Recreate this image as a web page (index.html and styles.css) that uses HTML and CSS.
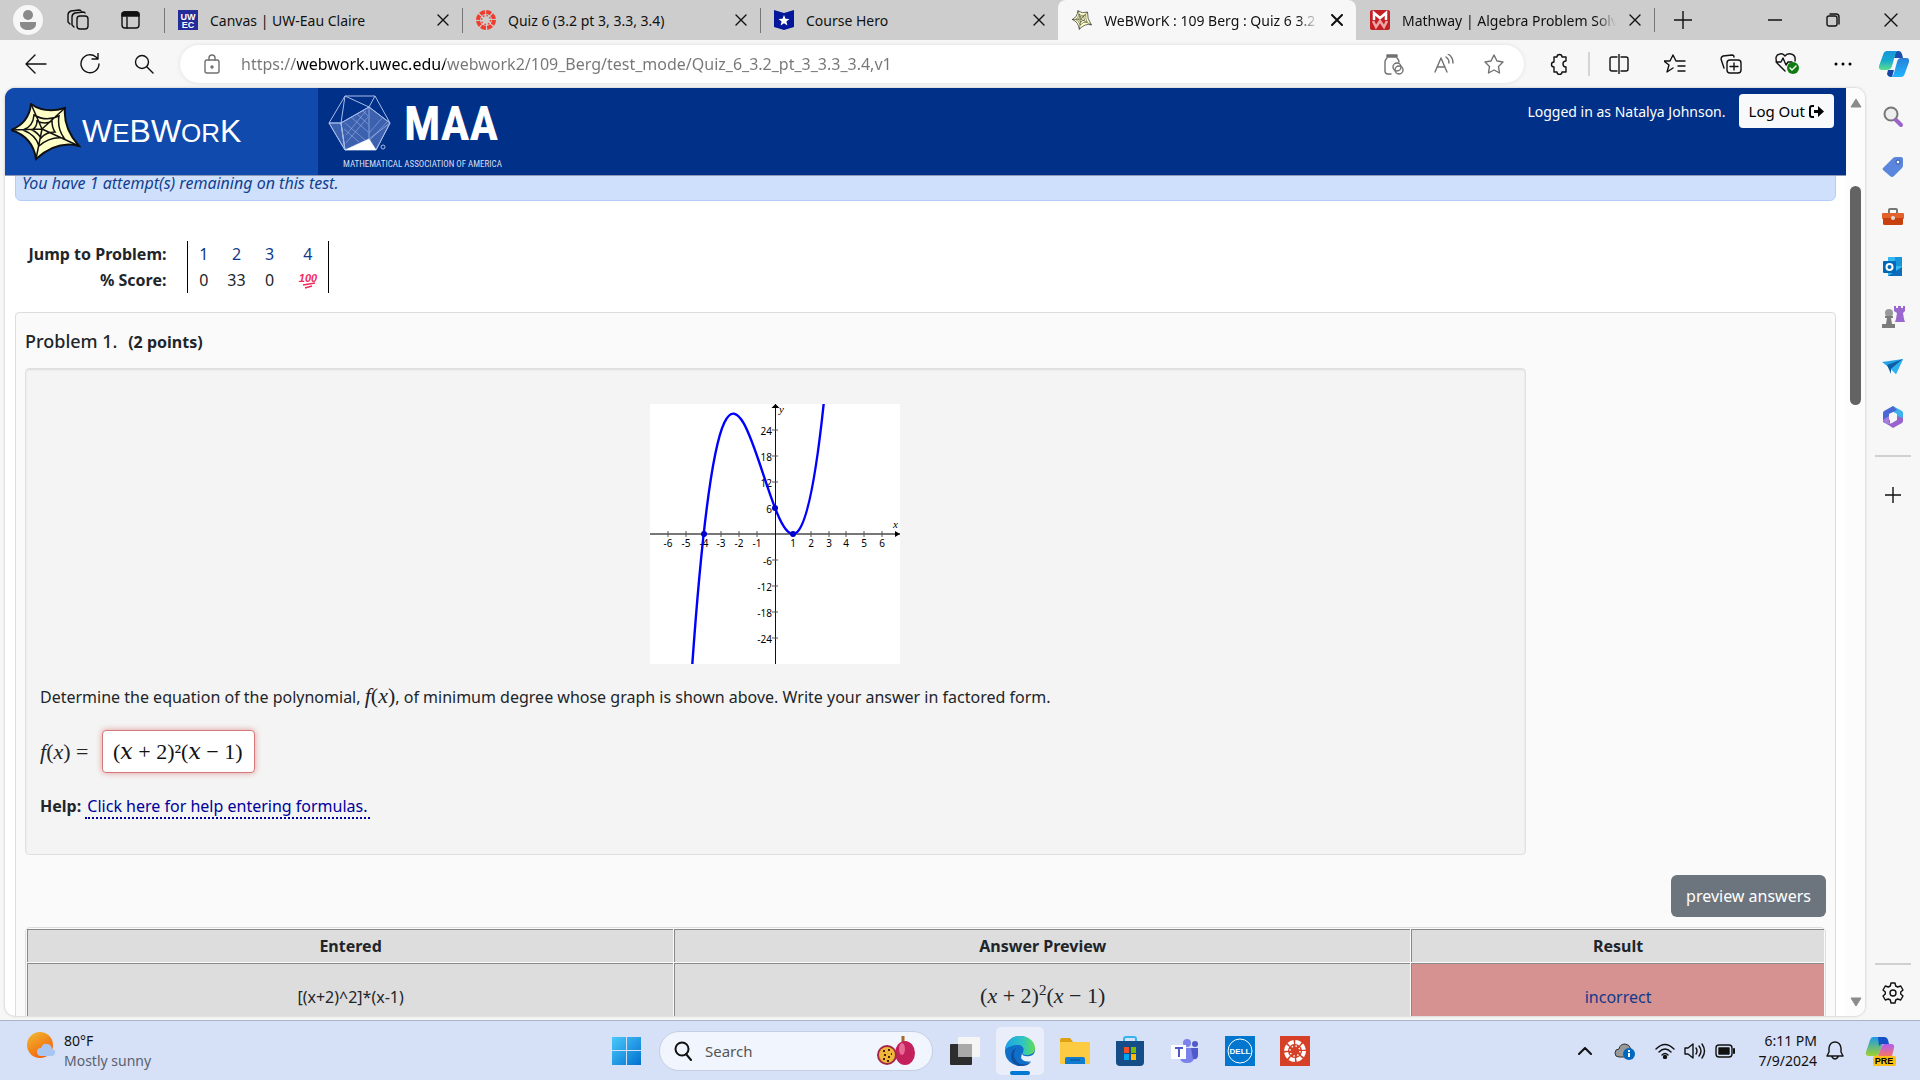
FILE: index.html
```
<!DOCTYPE html>
<html lang="en">

<head>
    <meta charset="utf-8">
    <title>WeBWorK : 109 Berg : Quiz 6 3.2</title>
    <link rel="stylesheet" href="styles.css">
</head>

<body>
    <!-- tabs -->
    <div class="tabs">
        <div class="tabs_left">
            <button class="avatar" aria-label="Profile"><svg width="18" height="24" viewBox="0 0 18 24"><circle cx="9" cy="7" r="5" fill="#8a8a8a"/><path d="M1 14h16v2c0 4-4 6-8 6s-8-2-8-6z" fill="#8a8a8a"/></svg></button>
            <button class="ib" aria-label="Workspaces"><svg width="22" height="22" viewBox="0 0 22 22" class="line"><rect x="10" y="7" width="11" height="13" rx="3"/><path d="M7 18l-2-2V8q0-3 3-4l8-1q2 0 2 1M3 15l-2-2V6q0-3 3-4l8-1q2 0 2 1"/></svg></button>
            <button class="ib" aria-label="Tab actions"><svg width="20" height="20" viewBox="0 0 20 20" class="line"><rect x="1" y="2" width="17" height="16" rx="3"/><path d="M1 6V4q0-2 3-2h11q3 0 3 2v2z" fill="#111"/><path d="M6 7v11"/></svg></button>
        </div>
        <div class="tab">
            <svg width="20" height="20" viewBox="0 0 20 20"><rect width="20" height="20" fill="#232c98"/><text x="10" y="10" class="fav_t">UW</text><text x="10" y="18" class="fav_t">EC</text></svg>
            <span class="tab_t">Canvas | UW-Eau Claire</span>
            <button class="x" aria-label="Close tab"><svg width="12" height="12" viewBox="0 0 12 12" class="line"><path d="M1 1l10 10M11 1L1 11"/></svg></button>
        </div>
        <div class="tab">
            <svg width="20" height="20" viewBox="0 0 20 20"><circle cx="10" cy="10" r="8" fill="none" stroke="#ef3c2d" stroke-width="4" stroke-dasharray="5 1.28"/><circle cx="10" cy="10" r="4.5" fill="none" stroke="#ef3c2d" stroke-width="1.5" stroke-dasharray="1.5 2"/></svg>
            <span class="tab_t">Quiz 6 (3.2 pt 3, 3.3, 3.4)</span>
            <button class="x" aria-label="Close tab"><svg width="12" height="12" viewBox="0 0 12 12" class="line"><path d="M1 1l10 10M11 1L1 11"/></svg></button>
        </div>
        <div class="tab before">
            <svg width="20" height="20" viewBox="0 0 20 20"><path d="M0 0l10 3 10-3v17l-10 3-10-3z" fill="#04179b"/><path d="M10 5l1.500 3.800 4 .2-3.100 2.500 1 4L10 13.300l-3.400 2.200 1-4L4.500 9l4-.2z" fill="#fff"/></svg>
            <span class="tab_t">Course Hero</span>
            <button class="x" aria-label="Close tab"><svg width="12" height="12" viewBox="0 0 12 12" class="line"><path d="M1 1l10 10M11 1L1 11"/></svg></button>
        </div>
        <div class="tab active">
            <svg width="20" height="20" viewBox="-1 -1 71 59" preserveAspectRatio="none"><use href="#web"/></svg>
            <span class="tab_t">WeBWorK : 109 Berg : Quiz 6 3.2</span>
            <button class="x" aria-label="Close tab"><svg width="12" height="12" viewBox="0 0 12 12" class="line bold"><path d="M1 1l10 10M11 1L1 11"/></svg></button>
        </div>
        <div class="tab last">
            <svg width="20" height="20" viewBox="0 0 20 20"><rect width="20" height="20" rx="2" fill="#c22026"/><path d="M4 10V3l6 5 6-5v7" fill="none" stroke="#fff" stroke-width="2.500"/><path d="M3 11l3 6 4-6 4 6 3-6" fill="none" stroke="#f0a5a5" stroke-width="2.500"/></svg>
            <span class="tab_t">Mathway | Algebra Problem Solver</span>
            <button class="x" aria-label="Close tab"><svg width="12" height="12" viewBox="0 0 12 12" class="line"><path d="M1 1l10 10M11 1L1 11"/></svg></button>
        </div>
        <button class="ib new" aria-label="New tab"><svg width="18" height="18" viewBox="0 0 18 18" class="line"><path d="M9 0v18M0 9h18"/></svg></button>
        <div class="win">
            <button class="ib" aria-label="Minimize"><svg width="14" height="14" viewBox="0 0 14 14" class="line"><path d="M0 7h14"/></svg></button>
            <button class="ib" aria-label="Restore"><svg width="14" height="14" viewBox="0 0 14 14" class="line"><rect x="1" y="3" width="10" height="10" rx="2"/><path d="M4 1h6q3 0 3 3v7"/></svg></button>
            <button class="ib" aria-label="Close"><svg width="14" height="14" viewBox="0 0 14 14" class="line"><path d="M1 1l12 12M13 1L1 13"/></svg></button>
        </div>
    </div>

    <!-- toolbar -->
    <div class="toolbar">
        <div class="nav">
            <button class="ib" aria-label="Back"><svg width="22" height="20" viewBox="0 0 22 20" class="line"><path d="M10 1L1 10l9 9M1 10h20"/></svg></button>
            <button class="ib" aria-label="Refresh"><svg width="22" height="22" viewBox="0 0 22 22" class="line"><path d="M20 11a9 9 0 1 1-3-7l2 2M19 0v6h-6"/></svg></button>
            <button class="ib" aria-label="Search"><svg width="20" height="20" viewBox="0 0 20 20" class="line"><circle cx="8" cy="8" r="6.500"/><path d="M13 13l6 6"/></svg></button>
        </div>
        <div class="address">
            <svg width="18" height="20" viewBox="0 0 18 20" class="line grey"><rect x="2" y="6" width="14" height="13" rx="2"/><path d="M6 6V4a3 3 0 0 1 6 0v2"/><circle cx="9" cy="13" r="1" fill="#666"/></svg>
            <input class="url" type="text" aria-label="Address" value="https://webwork.uwec.edu/webwork2/109_Berg/test_mode/Quiz_6_3.2_pt_3_3.3_3.4,v1">
            <button class="ib" aria-label="Shopping"><svg width="20" height="22" viewBox="0 0 20 22" class="line grey"><path d="M3 2h10v2H3z" fill="#777"/><path d="M3 5q-2 2-2 4v9q0 3 3 3h3M13 5q2 2 2 4"/><circle cx="13" cy="14" r="4"/><circle cx="15" cy="17" r="4"/></svg></button>
            <button class="ib" aria-label="Read aloud"><svg width="20" height="20" viewBox="0 0 20 20" class="line grey"><path d="M1 18L7 4l6 14M3 13h8M12 3q3 2 3 6M14 0q5 3 5 9"/></svg></button>
            <button class="ib" aria-label="Favorite"><svg width="22" height="22" viewBox="0 0 22 22" class="line grey"><path d="M11 2l3 6 6 1-4.500 4.500 1 6.500L11 17l-5.500 3 1-6.500L2 9l6-1z"/></svg></button>
        </div>
        <div class="tools">
            <button class="ib" aria-label="Extensions"><svg width="22" height="22" viewBox="0 0 22 22" class="line"><path d="M6 4h3a2.500 2.500 0 0 1 5 0h4v4a2.500 2.500 0 0 0 0 6v5h-4a2.500 2.500 0 0 1-5 0H6v-5a2.500 2.500 0 0 1 0-5z"/></svg></button>
            <i class="vr"></i>
            <button class="ib" aria-label="Split screen"><svg width="20" height="20" viewBox="0 0 20 20" class="line"><path d="M8 3H3q-2 0-2 2v10q0 2 2 2h5M12 3h5q2 0 2 2v10q0 2-2 2h-5M10 0v20"/></svg></button>
            <button class="ib" aria-label="Favorites"><svg width="22" height="20" viewBox="0 0 22 20" class="line"><path d="M12 7L9 1 6 7H0l5 4-2 7 6-4M12 7h9M14 12h7M14 17h7"/></svg></button>
            <button class="ib" aria-label="Collections"><svg width="22" height="20" viewBox="0 0 22 20" class="line"><rect x="7" y="6" width="14" height="13" rx="3"/><path d="M14 9v7M10 12.500h8M4 14L1 5q0-2 2-3l9-1q2 0 2 2"/></svg></button>
            <button class="ib" aria-label="Performance"><svg width="24" height="22" viewBox="0 0 24 22" class="line"><path d="M10 18L2 10Q-1 2 5 1q3-1 5 2 2-3 6-2 5 1 4 7M1 9h5l2-4 3 7 2-3h4"/><circle cx="18" cy="15" r="6" fill="#107c10" stroke="none"/><path d="M15 15l2 2 4-4" stroke="#fff"/></svg></button>
            <button class="ib" aria-label="More"><svg width="18" height="4" viewBox="0 0 18 4"><circle cx="2" cy="2" r="1.500"/><circle cx="9" cy="2" r="1.500"/><circle cx="16" cy="2" r="1.500"/></svg></button>
        </div>
        <button class="ib copilot" aria-label="Copilot"><svg width="30" height="28" viewBox="0 0 30 28"><defs><linearGradient id="k1" x2="0" y2="1"><stop stop-color="#1496dc"/><stop offset=".5" stop-color="#18a9cf"/><stop offset="1" stop-color="#5be08c"/></linearGradient><linearGradient id="k2" x2="0" y2="1"><stop stop-color="#2a7fd6"/><stop offset="1" stop-color="#1fb6ff"/></linearGradient></defs><path d="M17 1h3q2 0 3 3l1 4h-9z" fill="#1a4fae"/><path d="M9 20h6l-2 7h-1q-3 0-4-3z" fill="#1746a8"/><path d="M8 1h12q-3 0-4 4l-3 11q-1 4-5 4H3q-4 0-3-4L4 5q1-4 4-4z" fill="url(#k1)"/><path d="M22 8h5q4 0 3 4l-4 11q-1 4-4 4H11q3 0 4-4l3-11q1-4 4-4z" fill="url(#k2)"/></svg></button>
    </div>

    <div class="middle">
        <div class="page">
            <div class="content">
                <header class="head">
                    <a class="ww" href="#">
                        <svg width="70" height="58" viewBox="0 0 70 58"><g id="web"><path d="M0 27Q18 20 20 1q14 10 34 4-2 20 14 38-22-6-43 13Q22 34 0 27z" fill="#ffffc8" stroke="#111" stroke-width="2"/><path d="M31 26L0 27M31 26L20 1M31 26L54 5M31 26l37 17M31 26l-6 30M23 12q12 7 25 1-2 12 5 22-14-2-25 8-3-11-16-16 10-3 11-15zM26 18q8 4 15 0 0 7 3 11-9 0-14 6-4-6-9-8 5-3 5-9z" fill="none" stroke="#111" stroke-width="1.500"/></g></svg>
                        <span class="ww_t">W<small>E</small>BW<small>OR</small>K</span>
                    </a>
                    <a class="maa" href="#">
                        <svg width="66" height="58" viewBox="0 0 66 58" fill="none" stroke="#a9bce8" stroke-width="1"><path d="M17 1h30l15 27-14 27H17L1 28z"/><path d="M17 1L13 28 1 28M47 1L41 12 13 28l4 27L41 44 41 12l21 16-21 16 7 11M17 1l24 11"/><path d="M41 12L13 28l4 27 24-11 7 11 14-27zM1 28h12l4 27z" fill="#6d8bd0" fill-opacity=".55"/><path d="M17 28l20 17M16 34l15 13M23 22l17 15M29 19l11 10M35 16l5 5M41 38l14-16M42 45l17-18M18 40l20-24M18 48L40 22" stroke-opacity=".5"/><path d="M17 55l24-11 7 11z" fill="#fff" stroke="none"/><circle cx="55" cy="52" r="2"/></svg>
                        <span class="maa_t">MAA</span>
                        <span class="maa_s">MATHEMATICAL ASSOCIATION OF AMERICA</span>
                    </a>
                    <div class="login">
                        <span>Logged in as Natalya Johnson.</span>
                        <button class="logout">Log Out <svg width="15" height="13" viewBox="0 0 15 13"><path d="M5 1H3Q1 1 1 3v7q0 2 2 2h2" fill="none" stroke="#000" stroke-width="2"/><path d="M5 5h4V1l6 5.500L9 12V8H5z"/></svg></button>
                    </div>
                </header>

                <main>
                    <div class="alert">You have 1 attempt(s) remaining on this test.</div>
                    <table class="jump">
                        <tr>
                            <th>Jump to Problem:</th>
                            <td><a href="#p1">1</a></td>
                            <td><a href="#p2">2</a></td>
                            <td><a href="#p3">3</a></td>
                            <td><a href="#p4">4</a></td>
                        </tr>
                        <tr>
                            <th>% Score:</th>
                            <td>0</td>
                            <td>33</td>
                            <td>0</td>
                            <td><svg width="20" height="18" viewBox="0 0 20 18"><text x="10" y="11" class="hundred">100</text><path d="M5 14l12-2M7 17l7-2" stroke="#f2295b" stroke-width="1.500"/></svg></td>
                        </tr>
                    </table>

                    <section class="problem" id="p1">
                        <h2>Problem 1. <b>(2 points)</b></h2>
                        <div class="body">
                            <svg class="graph" width="250" height="260" viewBox="0 0 250 260">
                                <rect width="250" height="260" fill="#fff"/>
                                <path d="M0 130h250" stroke="#777" stroke-width="2"/>
                                <path d="M125.500 0v260" stroke="#111"/>
                                <path d="M250 130l-5-3v6zM125.500 0l-4 4h8z"/>
                                <path d="M18 127v6M36 127v6M54 127v6M71 127v6M89 127v6M107 127v6M143 127v6M161 127v6M179 127v6M196 127v6M214 127v6M232 127v6M122 26h6M122 52h6M122 78h6M122 104h6M122 156h6M122 182h6M122 208h6M122 234h6" stroke="#555"/>
                                <g class="g_x">
                                    <text x="18" y="143">-6</text><text x="36" y="143">-5</text><text x="54" y="143">-4</text><text x="71" y="143">-3</text><text x="89" y="143">-2</text><text x="107" y="143">-1</text><text x="143" y="143">1</text><text x="161" y="143">2</text><text x="179" y="143">3</text><text x="196" y="143">4</text><text x="214" y="143">5</text><text x="232" y="143">6</text>
                                </g>
                                <g class="g_y">
                                    <text x="122" y="31">24</text><text x="122" y="57">18</text><text x="122" y="83">12</text><text x="122" y="109">6</text><text x="122" y="161">-6</text><text x="122" y="187">-12</text><text x="122" y="213">-18</text><text x="122" y="239">-24</text>
                                </g>
                                <text x="243" y="124" class="g_i">x</text><text x="129" y="9" class="g_i">y</text>
                                <path d="M35.700 364C83.300-468 131 502.700 178.600-52" fill="none" stroke="#00f" stroke-width="2.400"/>
                                <g fill="#00c"><circle cx="54" cy="130" r="3"/><circle cx="125" cy="104" r="3"/><circle cx="143" cy="130" r="3"/></g>
                            </svg>
                            <p>Determine the equation of the polynomial, <span class="m"><i>f</i>(<i>x</i>)</span>, of minimum degree whose graph is shown above. Write your answer in factored form.</p>
                            <div class="answer">
                                <label for="ans1" class="m"><i>f</i>(<i>x</i>) =</label>
                                <input id="ans1" class="ans" type="text" value="(𝑥 + 2)²(𝑥 − 1)">
                            </div>
                            <p class="help"><b>Help:</b> <a href="#">Click here for help entering formulas.</a></p>
                        </div>
                        <div class="actions"><button class="preview">preview answers</button></div>
                        <table class="results">
                            <tr>
                                <th class="c1">Entered</th>
                                <th class="c2">Answer Preview</th>
                                <th class="c3">Result</th>
                            </tr>
                            <tr>
                                <td>[(x+2)^2]*(x-1)</td>
                                <td><span class="m">(<i>x</i> + 2)<sup>2</sup>(<i>x</i> − 1)</span></td>
                                <td class="bad"><a href="#">incorrect</a></td>
                            </tr>
                        </table>
                    </section>
                </main>
            </div>
            <div class="scroll">
                <svg width="12" height="10" viewBox="0 0 12 10"><path d="M6 1l5 8H1z" fill="#8b8b8b" stroke="#8b8b8b" stroke-linejoin="round"/></svg>
                <div class="track"><div class="thumb"></div></div>
                <svg width="12" height="10" viewBox="0 0 12 10"><path d="M1 1h10L6 9z" fill="#8b8b8b" stroke="#8b8b8b" stroke-linejoin="round"/></svg>
            </div>
        </div>

        <!-- edge sidebar -->
        <aside class="side">
            <button class="ib" aria-label="Search"><svg width="22" height="22" viewBox="0 0 22 22"><circle cx="9" cy="8" r="6.500" fill="#eee" stroke="#777" stroke-width="2"/><path d="M14 14l5 5" stroke="#9b62c9" stroke-width="4" stroke-linecap="round"/></svg></button>
            <button class="ib" aria-label="Shopping"><svg width="22" height="22" viewBox="0 0 22 22"><path d="M1 12L11 2q1-1 3-1h5q2 0 2 2v6q0 2-1 3L12 20q-2 2-4 0l-7-6q-1-1 0-2z" fill="#5b86de"/><circle cx="16" cy="6" r="2" fill="#fff" stroke="#2b4a9c"/></svg></button>
            <button class="ib" aria-label="Tools"><svg width="22" height="20" viewBox="0 0 22 20"><path d="M7 6V3q0-1 1-1h6q1 0 1 1v3" fill="none" stroke="#777" stroke-width="2"/><rect y="6" width="22" height="6" rx="1" fill="#e2622b"/><path d="M1 11h20v6q0 1-2 1H3q-2 0-2-1z" fill="#c9400f"/><circle cx="11" cy="11" r="2" fill="#ddd"/></svg></button>
            <button class="ib" aria-label="Outlook"><svg width="22" height="22" viewBox="0 0 22 22"><path d="M6 1h14v19H6z" fill="#35b8f1"/><path d="M13 1h7v9h-7z" fill="#1793dc"/><path d="M6 20l14-9v9z" fill="#0f6cbd"/><rect x="1" y="5" width="13" height="12" rx="1" fill="#0068b8"/><circle cx="7.500" cy="11" r="3" fill="none" stroke="#fff" stroke-width="2"/></svg></button>
            <button class="ib" aria-label="Games"><svg width="24" height="24" viewBox="0 0 24 24"><path d="M13 1h2v2h2V1h3v2h2V1h2v5l-2 2 1 6 1 3h-10l1-3 1-6-3-2z" fill="#9a66cf"/><circle cx="8" cy="8" r="4" fill="#999"/><path d="M4 11h8v2h-2l1 6h3v4H1v-4h4l1-6H4z" fill="#7c7c7c"/></svg></button>
            <button class="ib" aria-label="Drop"><svg width="22" height="20" viewBox="0 0 22 20"><path d="M0 5l21-3-7 15-5-5z" fill="#29a3e8"/><path d="M5 8l16-6L9 12v5z" fill="#0d5fa8"/><path d="M21 2l-7 15-5-5z" fill="#2fb1f0"/></svg></button>
            <button class="ib" aria-label="Microsoft 365"><svg width="22" height="24" viewBox="0 0 22 24"><path d="M11 1l9 5q1 1 1 2v7l-6-3V9L8 5z" fill="#3fb2ec"/><path d="M11 1L2 6Q1 7 1 8v9l6 3q2-4 0-6V9l8-4z" fill="#4a67d6"/><path d="M7 11v9l-5-3q-1-1-1-2z" fill="#a97be0"/><path d="M21 13v3q0 1-1 2l-9 5-6-4q3 0 5-1l5-3v-4z" fill="#9a62cc"/><circle cx="11" cy="12" r="4" fill="#f7f7f7"/></svg></button>
            <hr>
            <button class="ib" aria-label="Customize"><svg width="16" height="16" viewBox="0 0 16 16" class="line"><path d="M8 0v16M0 8h16"/></svg></button>
            <hr class="low">
            <button class="ib" aria-label="Settings"><svg width="22" height="22" viewBox="0 0 22 22" class="line"><path d="M9 1h4l.7 3 2 1 3-1 2.300 4-2.300 2v2l2.300 2-2.300 4-3-1-2 1-.7 3H9l-.7-3-2-1-3 1L1 14l2.300-2v-2L1 8l2.300-4 3 1 2-1z"/><circle cx="11" cy="11" r="3"/></svg></button>
        </aside>
    </div>

    <!-- taskbar -->
    <footer class="taskbar">
        <div class="weather">
            <svg width="30" height="30" viewBox="0 0 30 30"><defs><linearGradient id="sun" x2=".6" y2="1"><stop stop-color="#f0bd32"/><stop offset="1" stop-color="#f4610b"/></linearGradient></defs><circle cx="13" cy="14" r="13" fill="url(#sun)"/><path d="M14 25q-4 0-4-4t4-4q2-5 6-4 4 0 5 5 4 1 3 4 0 3-4 3z" fill="#a9c6f3"/></svg>
            <div class="two"><span>80°F</span><span class="dim">Mostly sunny</span></div>
        </div>
        <div class="apps">
            <button class="start" aria-label="Start"><svg width="30" height="30" viewBox="0 0 30 30"><defs><linearGradient id="w" x2="1" y2="1"><stop stop-color="#4bc9fb"/><stop offset="1" stop-color="#0070d0"/></linearGradient></defs><path d="M0 1h14v13H0zM15 1h14v13H15zM0 15h14v14H0zM15 15h14v14H15z" fill="url(#w)"/></svg></button>
            <label class="search">
                <svg width="20" height="20" viewBox="0 0 20 20" class="line bold"><circle cx="9" cy="8" r="6.500"/><path d="M13 13l5 6"/></svg>
                <input type="text" placeholder="Search" aria-label="Search">
                <svg width="40" height="32" viewBox="0 0 40 32"><path d="M27 1v7" stroke="#a8682a" stroke-width="3"/><ellipse cx="29" cy="18" rx="10" ry="12" fill="#c4205c"/><ellipse cx="26" cy="14" rx="3" ry="6" fill="#e56a94"/><circle cx="11" cy="20" r="10" fill="#a32848"/><circle cx="11" cy="20" r="8" fill="#eeb73a"/><path d="M7 16h2M12 15h2M15 19h1M8 20h2M12 22h2M7 24h2M11 26h2" stroke="#4a2410" stroke-width="2"/></svg>
            </label>
            <button class="app" aria-label="Task view"><svg width="32" height="30" viewBox="0 0 32 30"><rect x="1" y="8" width="22" height="21" rx="1" fill="#2d2d2d"/><rect x="9" y="1" width="22" height="20" rx="1" fill="#f5f5f5"/><path d="M9 8h14v13H9z" fill="#a9a9a9"/></svg></button>
            <button class="app on" aria-label="Edge"><svg width="32" height="32" viewBox="0 0 32 32"><defs><linearGradient id="e1" x2="1"><stop stop-color="#1ba1e8"/><stop offset=".6" stop-color="#2fc6c0"/><stop offset="1" stop-color="#65dd4f"/></linearGradient></defs><circle cx="16" cy="16" r="15" fill="#0f6fc9"/><path d="M1 15C2 6 8 1 16 1c9 0 15 6 15 12 0 5-4 7-8 7-3 0-5-1-4-3 2-4-1-7-5-7-5 0-11 2-13 5z" fill="url(#e1)"/><path d="M12 13q-5 8 1 14 6 5 14 0-3 4-9 4-9 0-11-8 0-8 5-10z" fill="#124f9e"/><path d="M31 15q0 5-5 6-8 1-8-3l-1 5q3 5 11 3 2-2 3-5z" fill="#ebf0fb"/></svg></button>
            <button class="app" aria-label="Explorer"><svg width="32" height="28" viewBox="0 0 32 28"><path d="M1 3q0-2 2-2h8l3 4h-3v5H1z" fill="#dfa010"/><rect x="1" y="5" width="30" height="22" rx="1" fill="#fccb41"/><path d="M6 27v-5q0-2 2-2h16q2 0 2 2v5z" fill="#117bcf"/><path d="M11 23h10" stroke="#0a4e8c" stroke-width="1"/></svg></button>
            <button class="app" aria-label="Store"><svg width="30" height="32" viewBox="0 0 30 32"><path d="M9 7V4q0-2 2-2h8q2 0 2 2v3" fill="none" stroke="#35b4ee" stroke-width="2"/><path d="M1 6h28v21q0 4-4 4H5q-4 0-4-4z" fill="#144d87"/><path d="M9 12h5v6H9z" fill="#f25022"/><path d="M16 12h5v6h-5z" fill="#7fba00"/><path d="M9 19h5v6H9z" fill="#00a4ef"/><path d="M16 19h5v6h-5z" fill="#ffb900"/></svg></button>
            <button class="app" aria-label="Teams"><svg width="28" height="26" viewBox="0 0 28 26"><circle cx="16" cy="5" r="4" fill="#7b83eb"/><circle cx="24" cy="6" r="3" fill="#5059c9"/><path d="M9 10h14v9q0 6-7 6t-7-6z" fill="#7b83eb"/><path d="M20 10h7v7q0 5-5 4z" fill="#5059c9"/><rect y="7" width="15" height="14" fill="#fff"/><path d="M4 10h8M8 10v9" stroke="#5059c9" stroke-width="2"/></svg></button>
            <button class="app" aria-label="Dell"><svg width="30" height="30" viewBox="0 0 30 30"><rect width="30" height="30" fill="#0076ce"/><circle cx="15" cy="15" r="12" fill="none" stroke="#fff"/><text x="15" y="18" class="dell">DELL</text></svg></button>
            <button class="app" aria-label="Canvas"><svg width="30" height="30" viewBox="0 0 30 30"><rect width="30" height="30" fill="#d64027"/><circle cx="15" cy="15" r="9" fill="none" stroke="#fff" stroke-width="4" stroke-dasharray="5.500 1.570"/><circle cx="15" cy="15" r="5" fill="none" stroke="#fff" stroke-width="1.500" stroke-dasharray="1.500 2.400"/></svg></button>
        </div>
        <div class="tray">
            <button class="ib" aria-label="Hidden icons"><svg width="14" height="8" viewBox="0 0 14 8" class="line bold"><path d="M1 7l6-6 6 6"/></svg></button>
            <button class="ib cloud" aria-label="OneDrive"><svg width="22" height="18" viewBox="0 0 22 18"><path d="M5 15q-4 0-4-4t4-4q1-5 6-5 4 0 6 5l-6 8z" fill="#999" stroke="#333"/><circle cx="15" cy="12" r="6" fill="#0067c0"/><path d="M15 11v4M15 8v2" stroke="#fff" stroke-width="2"/></svg></button>
            <button class="ib" aria-label="Wifi"><svg width="20" height="16" viewBox="0 0 20 16" class="line"><path d="M1 6q9-9 18 0M4 9q6-6 12 0M7 12q3-3 6 0"/><circle cx="10" cy="14" r="1.500" fill="#111"/></svg></button>
            <button class="ib" aria-label="Volume"><svg width="22" height="18" viewBox="0 0 22 18" class="line"><path d="M1 6h3l5-4v14l-5-4H1zM12 6q2 3 0 6M15 4q4 5 0 10M18 2q5 7 0 14"/></svg></button>
            <button class="ib" aria-label="Battery"><svg width="20" height="14" viewBox="0 0 20 14" class="line"><rect x="1" y="1" width="16" height="12" rx="3"/><rect x="4" y="4" width="10" height="6" fill="#111"/><path d="M19 5v4" stroke-width="2"/></svg></button>
            <div class="two clock"><span>6:11 PM</span><span>7/9/2024</span></div>
            <button class="ib" aria-label="Notifications"><svg width="18" height="20" viewBox="0 0 18 20" class="line"><path d="M1 15l2-4V7q1-6 6-6t6 6v4l2 4zM6 16q3 4 6 0"/></svg></button>
            <button class="ib pre" aria-label="Copilot preview"><svg width="32" height="30" viewBox="0 0 32 30"><defs><linearGradient id="c1" x2="0" y2="1"><stop stop-color="#1b9be8"/><stop offset="1" stop-color="#9fd12f"/></linearGradient><linearGradient id="c2" x2="0" y2="1"><stop stop-color="#b35cf0"/><stop offset="1" stop-color="#f5746a"/></linearGradient></defs><path d="M8 1h12l-6 17q-1 2-3 2H4q-4 0-3-4L5 4q1-3 3-3z" fill="url(#c1)"/><path d="M13 1h6q3 0 4 3l1 4h-6q-3 0-4 2z" fill="#1650c8"/><path d="M19 8h7q4 0 3 4l-2 8H13l4-10q1-2 2-2z" fill="url(#c2)"/><rect x="8" y="20" width="23" height="10" rx="2" fill="#fcbf16"/><text x="19" y="28" class="pre_t">PRE</text></svg></button>
        </div>
    </footer>
</body>

</html>
```
FILE: styles.css
```
* {
    margin: 0;
    padding: 0;
    box-sizing: border-box;
}

body {
    height: 100vh;
    display: flex;
    flex-direction: column;
    overflow: hidden;
    background-color: #f7f7f7;
    color: #212529;
    font-family: "Noto Sans", "Open Sans", sans-serif;
    font-size: 16px;
}

button {
    border: none;
    background: none;
    font-family: inherit;
    color: inherit;
}

input {
    border: none;
    outline: none;
    background: none;
    font-family: inherit;
}

svg {
    display: block;
    flex: none;
}

.line {
    fill: none;
    stroke: #111;
    stroke-width: 1.4;
    stroke-linecap: round;
    stroke-linejoin: round;
}

.bold {
    stroke-width: 2;
}

.grey {
    stroke: #707070;
}

.ib {
    display: flex;
    align-items: center;
    justify-content: center;
    width: 24px;
    height: 24px;
    flex: none;
}

/* tabs */
.tabs {
    display: flex;
    height: 40px;
    flex: none;
    background-color: #cdcdcd;
    color: #111;
}

.tabs_left {
    display: flex;
    align-items: center;
    gap: 29px;
    width: 164px;
    padding-left: 13px;
    flex: none;
}

.avatar {
    width: 30px;
    height: 30px;
    border-radius: 50%;
    background-color: #f7f7f7;
    display: flex;
    align-items: center;
    justify-content: center;
}

.avatar + .ib {
    margin-left: -6px;
}

.tab {
    position: relative;
    display: flex;
    align-items: center;
    gap: 12px;
    flex: 0 1 298px;
    min-width: 0;
    padding: 0 12px 0 14px;
}

.tab::before {
    content: "";
    position: absolute;
    left: 0;
    top: 8px;
    height: 25px;
    border-left: 1px solid #777;
}

.tab_t {
    flex: 1;
    font-size: 14px;
    white-space: nowrap;
    overflow: hidden;
}

.x {
    width: 14px;
    height: 14px;
    display: flex;
    align-items: center;
    justify-content: center;
}

.before {
    border-bottom-right-radius: 8px;
}

.active {
    background-color: #f7f7f7;
    border-radius: 8px 8px 0 0;
}

.active .tab_t,
.last .tab_t {
    mask-image: linear-gradient(to left, transparent, #000 20px);
}

.active::before,
.last::before {
    display: none;
}

.new {
    width: 56px;
    height: 24px;
    margin-top: 8px;
    border-left: 1px solid #777;
}

.win {
    display: flex;
    align-items: center;
    gap: 34px;
    margin-left: auto;
    padding-right: 17px;
}

/* toolbar */
.toolbar {
    display: flex;
    align-items: center;
    height: 48px;
    flex: none;
}

.nav {
    display: flex;
    justify-content: space-between;
    width: 180px;
    padding: 0 24px;
}

.address {
    display: flex;
    align-items: center;
    gap: 26px;
    flex: 1;
    height: 38px;
    padding: 0 18px 0 23px;
    border-radius: 19px;
    background-color: #fff;
    box-shadow: 0 0 4px #ddd;
}

.url {
    flex: 1;
    margin-left: -6px;
    font-size: 16px;
    line-height: 24px;
    color: transparent;
    background-image: linear-gradient(to right, #767676 56px, #000 56px, #000 204px, #767676 204px);
    background-clip: text;
}

.tools {
    display: flex;
    align-items: center;
    gap: 32px;
    width: 344px;
    padding-left: 23px;
}

.vr {
    height: 24px;
    margin: 0 -15px;
    border-left: 2px solid #d5d5d5;
}

.copilot {
    width: 52px;
}

/* page */
.middle {
    display: flex;
    flex: 1;
    min-height: 0;
}

.page {
    display: flex;
    flex: 1;
    min-width: 0;
    margin: 0 0 4px 5px;
    border-radius: 10px;
    overflow: hidden;
    background-color: #fff;
    box-shadow: 0 0 3px #bbb;
}

.content {
    flex: 1;
    min-width: 0;
}

.head {
    position: relative;
    display: flex;
    height: 88px;
    background-color: #003087;
    border-bottom: 1px solid #8d99b5;
    color: #fff;
}

.head a {
    color: #fff;
    text-decoration: none;
}

.ww {
    display: flex;
    align-items: center;
    gap: 1px;
    width: 313px;
    padding-left: 6px;
    background-color: #104aad;
}

.ww_t {
    font-family: "Liberation Sans", sans-serif;
    font-size: 32px;
}

.ww_t small {
    font-size: 26px;
}

.maa {
    display: grid;
    grid-template-columns: 70px auto;
    grid-template-rows: 60px 20px;
    align-items: center;
    padding: 6px 0 0 10px;
    gap: 0 6px;
}

.maa_t {
    font-family: "Liberation Sans Narrow", "Roboto Condensed", "Open Sans", sans-serif;
    font-weight: bold;
    font-size: 48px;
    line-height: 64px;
}

.maa_s {
    grid-column: 1 / 3;
    padding-left: 15px;
    font-family: "Liberation Sans Narrow", "Roboto Condensed", Roboto, sans-serif;
    font-size: 9px;
    line-height: 12px;
    color: #d5def2;
    white-space: nowrap;
}

.login {
    display: flex;
    align-items: center;
    gap: 13px;
    height: 34px;
    margin: 6px 12px 0 auto;
    font-size: 14px;
}

.logout {
    display: flex;
    align-items: center;
    gap: 4px;
    height: 34px;
    padding: 0 10px;
    border-radius: 4px;
    background-color: #f8f9fa;
    color: #000;
    font-size: 15px;
}

main {
    padding: 0 10px;
}

.alert {
    margin-top: -8px;
    padding: 3px 6px 6px;
    border: 1px solid #b3cdfb;
    border-radius: 6px;
    background-color: #cfe0fc;
    color: #12408f;
    font-style: italic;
    line-height: 22px;
}

.jump {
    margin: 40px 0 0 10px;
    border-collapse: collapse;
    line-height: 26px;
}

.jump th {
    width: 162px;
    padding-right: 20px;
    text-align: right;
    border-right: 1px solid #000;
}

.jump td {
    width: 33px;
    text-align: center;
}

.jump td:last-child {
    width: 42px;
    padding-left: 2px;
    border-right: 1px solid #000;
}

.jump svg {
    margin: auto;
}

.jump a,
.bad a {
    color: #0f3a8a;
    text-decoration: none;
}

.hundred {
    font: italic bold 11px "Liberation Sans", sans-serif;
    fill: #f2295b;
    text-anchor: middle;
}

.problem {
    margin-top: 19px;
    padding: 14px 9px 0;
    height: 800px;
    border: 1px solid #ddd;
    border-radius: 4px;
    background-color: #fafafa;
}

.problem h2 {
    margin-bottom: 12px;
    font-size: 18px;
    line-height: 28px;
    font-weight: 500;
}

.problem h2 b {
    margin-left: 6px;
    font-size: 16px;
}

.body {
    width: 83.333%;
    padding: 35px 14px 35px;
    border: 1px solid #e0e0e0;
    border-radius: 4px;
    background-color: #f4f4f4;
    box-shadow: inset 0 1px 2px #ddd;
}

.graph {
    margin: 0 auto 20px;
}

.g_x text,
.g_y text {
    font: 10px "Noto Sans", sans-serif;
    text-anchor: middle;
}

.g_y text {
    text-anchor: end;
}

.g_i {
    font: italic 11px "Liberation Serif", serif;
}

.body p {
    line-height: 26px;
}

.m {
    font-family: "Liberation Serif", serif;
    font-size: 22px;
    line-height: 20px;
}

.m sup {
    font-size: 15px;
    line-height: 0;
}

.answer {
    display: flex;
    align-items: center;
    gap: 5px;
    margin: 20px 0;
}

.answer label {
    min-width: 57px;
}

.ans {
    width: 153px;
    height: 43px;
    padding: 0 10px;
    border: 1px solid #d57878;
    border-radius: 4px;
    background-color: #fff;
    box-shadow: 0 0 6px #e09a9a;
    font-family: "Liberation Serif", "DejaVu Serif", serif;
    font-size: 22px;
    color: #111;
}

.help a {
    padding: 0 2px;
    color: #00009c;
    text-decoration: none;
    border-bottom: 2px dotted #00009c;
}

.actions {
    display: flex;
    justify-content: flex-end;
    margin: 20px 0 10px;
}

.preview {
    height: 42px;
    padding: 0 15px;
    border-radius: 6px;
    background-color: #6c757d;
    color: #fff;
    font-size: 16px;
}

.results {
    width: 100%;
    border: 1px solid #ddd;
    border-radius: 5px;
    border-spacing: 1px;
    table-layout: fixed;
    text-align: center;
}

.results th,
.results td {
    height: 33px;
    border-top: 1px solid #888;
    border-left: 1px solid #888;
    background-color: #ddd;
}

.results td {
    height: 66px;
}

.c1 {
    width: 36%;
}

.c3 {
    width: 23%;
}

.results .bad {
    background-color: #d69191;
}

/* scrollbar */
.scroll {
    display: flex;
    flex-direction: column;
    align-items: center;
    justify-content: space-between;
    width: 19px;
    padding: 10px 0 9px;
    background-color: #fcfcfc;
}

.track {
    flex: 1;
    padding-top: 78px;
}

.thumb {
    width: 11px;
    height: 219px;
    border-radius: 6px;
    background-color: #636363;
}

.side {
    display: flex;
    flex-direction: column;
    align-items: center;
    gap: 26px;
    width: 55px;
    padding: 17px 0 15px;
}

.side hr {
    width: 36px;
    border: none;
    border-top: 2px solid #d0d0d0;
}

.side .low {
    margin-top: auto;
    margin-bottom: -10px;
}

/* taskbar */
.taskbar {
    display: grid;
    grid-template-columns: 1fr auto 1fr;
    align-items: center;
    height: 60px;
    flex: none;
    border-top: 1px solid #a9b4c5;
    background-color: #d6e0f6;
    color: #111;
}

.weather {
    display: flex;
    gap: 7px;
    padding-left: 27px;
}

.two {
    display: flex;
    flex-direction: column;
    font-size: 14px;
    line-height: 20px;
}

.dim {
    color: #5a6170;
}

.apps {
    display: flex;
    align-items: center;
    gap: 7px;
    padding-left: 11px;
}

.start {
    margin-right: 10px;
}

.search {
    display: flex;
    align-items: center;
    width: 274px;
    height: 40px;
    margin-right: 1px;
    padding: 0 16px 0 13px;
    border-radius: 20px;
    background-color: #f1f5fd;
    border: 1px solid #c5cfe4;
}

.search input {
    flex: 1;
    min-width: 0;
    margin-left: 12px;
    font-size: 15px;
}

.search input::placeholder {
    color: #555;
}

.app {
    display: flex;
    align-items: center;
    justify-content: center;
    width: 48px;
    height: 48px;
    border-radius: 5px;
}

.on {
    position: relative;
    background-color: #e9eefa;
}

.on::after {
    content: "";
    position: absolute;
    bottom: 0;
    width: 20px;
    height: 4px;
    border-radius: 2px;
    background-color: #0078d4;
}

.tray {
    display: flex;
    align-items: center;
    justify-content: flex-end;
    gap: 6px;
    padding-right: 23px;
}

.cloud {
    margin: 0 10px;
}

.clock {
    text-align: right;
    margin-left: 16px;
}

.pre {
    width: 32px;
    margin-left: 12px;
}

.fav_t {
    font: bold 9px "Liberation Sans", sans-serif;
    fill: #fff;
    text-anchor: middle;
}

.dell {
    font: bold 8px "Liberation Sans", sans-serif;
    fill: #fff;
    text-anchor: middle;
}

.pre_t {
    font: bold 9px "Liberation Sans", sans-serif;
    text-anchor: middle;
}
```
